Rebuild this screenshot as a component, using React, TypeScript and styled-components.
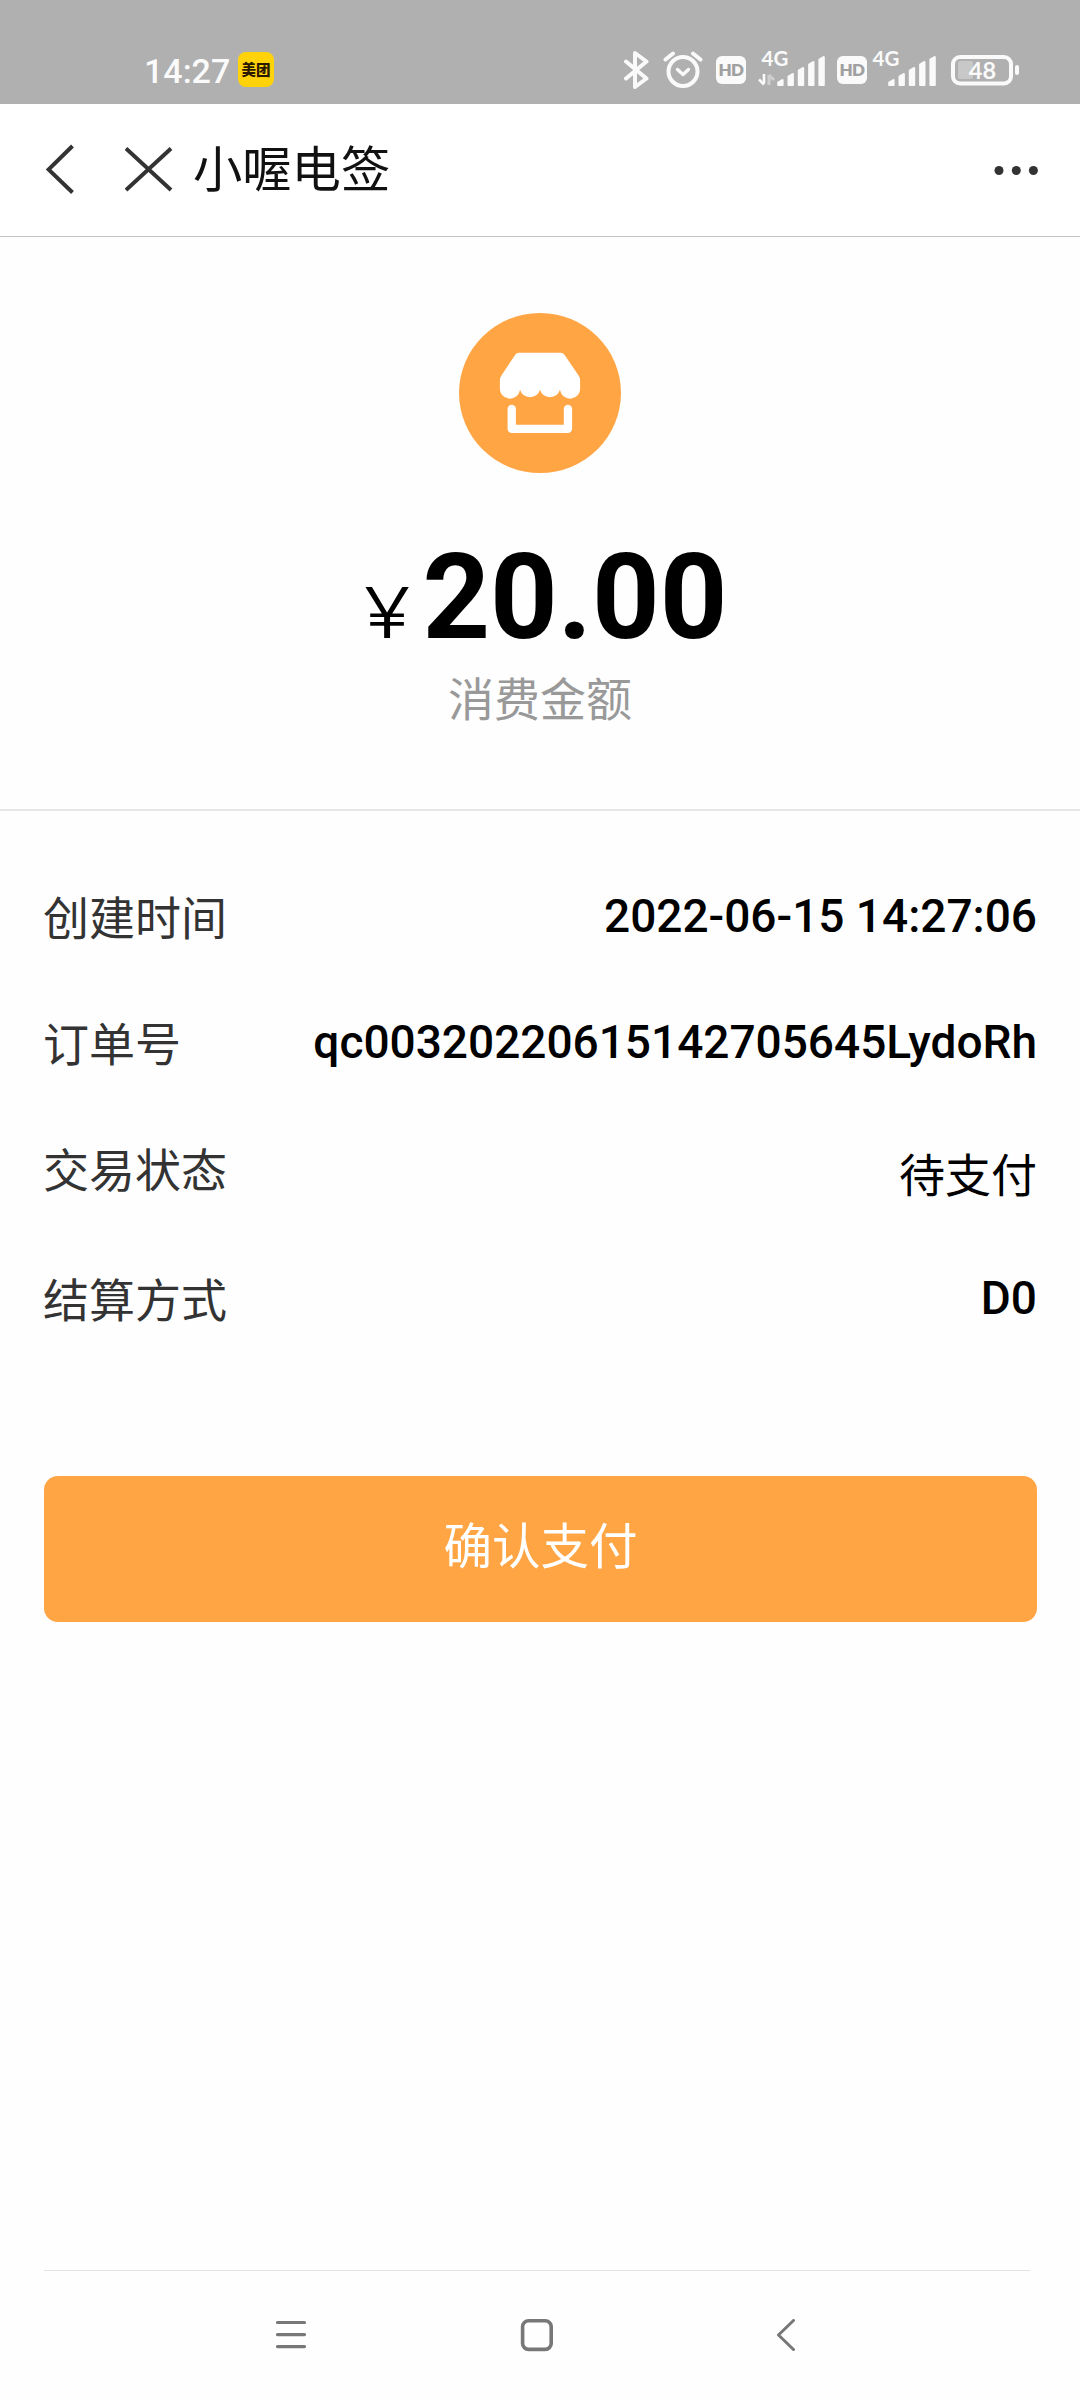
import React from "react";
import styled, { createGlobalStyle } from "styled-components";

const GlobalStyle = createGlobalStyle`
  * { box-sizing: border-box; }
  body { margin: 0; background: #fff; }
`;

const sans = `Roboto, "Noto Sans CJK SC", sans-serif`;

const Screen = styled.div`
  width: 1080px;
  height: 2400px;
  display: flex;
  flex-direction: column;
  background: #fefefe;
  font-family: ${sans};
  color: #000;
`;

const StatusBar = styled.div`
  height: 104px;
  display: flex;
  align-items: flex-start;
  background: #b0b0b0;
  color: #fafafa;
  padding: 50px 61px 0 144px;
`;

const Clock = styled.span`
  width: 94px;
  font-size: 34px;
  line-height: 42px;
  font-weight: 500;
  white-space: nowrap;
`;

const AppBadge = styled.span`
  width: 36px;
  height: 35px;
  margin-top: 2px;
  border-radius: 8px;
  background: #ffd20a;
  color: #2a1a00;
  font: 900 14.5px/34px "Noto Sans CJK SC", sans-serif;
  text-align: center;
  white-space: nowrap;
`;

const StatusIcons = styled.div`
  margin-left: auto;
  display: flex;
  align-items: flex-start;
  svg { display: block; }
`;

const HdBadge = styled.span<{ $left: number }>`
  width: 30px;
  height: 28px;
  margin: 6px 0 0 ${(p) => p.$left}px;
  border-radius: 6px;
  background: #fafafa;
  color: #a0a0a0;
  font: 800 17px/28px Lato, sans-serif;
  letter-spacing: -0.6px;
  text-align: center;
`;

const SignalSvg = styled.svg<{ $left: number }>`
  margin: -10px 0 0 ${(p) => p.$left}px;
`;

const BatterySvg = styled.svg`
  margin-left: 14px;
`;

const AlarmSvg = styled.svg`
  margin-left: 14px;
`;

const Header = styled.header`
  height: 133px;
  display: flex;
  align-items: flex-start;
  padding: 32px 42px 0 46px;
  border-bottom: 1px solid #c4c4c4;
  background: #fff;
`;

const HeaderIcon = styled.svg<{ $gap: number }>`
  display: block;
  flex: none;
  margin: 8px ${(p) => p.$gap}px 0 0;
`;

const Title = styled.h1`
  margin: 0;
  padding-top: 2px;
  font-size: 49.3px;
  line-height: 64px;
  font-weight: 400;
  color: #111;
  flex: 1;
`;

const Summary = styled.section`
  height: 574px;
  display: flex;
  flex-direction: column;
  align-items: center;
  padding-top: 76px;
  border-bottom: 2px solid #e7e7e7;
`;

const Amount = styled.div`
  display: flex;
  align-items: baseline;
  height: 140px;
  margin-top: 55px;
  line-height: 140px;
  padding-left: 11px;
`;

const Currency = styled.span`
  font-family: Inter, sans-serif;
  font-size: 70px;
  font-weight: 300;
  margin-right: 21px;
  transform: scaleX(1.22);
  transform-origin: left;
`;

const Figure = styled.span`
  font-size: 118px;
  font-weight: 700;
`;

const Caption = styled.div`
  margin-top: -2px;
  font-size: 46px;
  line-height: 68px;
  color: #999;
`;

const Details = styled.dl`
  margin: 0;
  padding: 44.5px 43px 0;
`;

const Row = styled.div<{ $cjk?: boolean }>`
  height: 126.4px;
  margin-bottom: ${(p) => (p.$cjk ? 3 : 0)}px;
  display: flex;
  justify-content: space-between;
  align-items: center;
`;

const Label = styled.dt`
  font-size: 46px;
  line-height: 60px;
  color: #333;
`;

const Value = styled.dd<{ $cjk?: boolean }>`
  margin: 0;
  padding: ${(p) => (p.$cjk ? "10px 0 0" : "0 0 6px")};
  font-size: 46px;
  line-height: 60px;
  font-weight: ${(p) => (p.$cjk ? 400 : 500)};
`;

const PayButton = styled.button`
  width: 993px;
  height: 146px;
  margin: 112px 0 0 44px;
  padding: 0 0 2px;
  border: 0;
  border-radius: 14px;
  background: #ffa544;
  color: #fff;
  font: 400 48.5px/60px ${sans};
`;

const BottomNav = styled.nav`
  margin: auto 50px 0 44px;
  height: 130px;
  display: flex;
  align-items: flex-start;
  border-top: 1px solid #e3e3e3;
  padding: 48px 0 0 231px;
`;

const NavIcon = styled.svg<{ $gap: number }>`
  display: block;
  margin-right: ${(p) => p.$gap}px;
`;

const rows = [
  { label: "创建时间", value: "2022-06-15 14:27:06" },
  { label: "订单号", value: "qc00320220615142705645LydoRh" },
  { label: "交易状态", value: "待支付", cjk: true },
  { label: "结算方式", value: "D0" },
];

function Signal({ left, arrows }: { left: number; arrows?: boolean }) {
  return (
    <SignalSvg $left={left} width="68" height="50" viewBox="0 -10 68 50" fill="#fafafa">
      <text x="3.5" y="16" fontFamily="Lato, sans-serif" fontWeight="700" fontSize="20.5">4G</text>
      {arrows && (
        <>
          <path d="M6 24v9.5M6 34.5L1 29.5" fill="none" stroke="#fafafa" strokeWidth="2.6" />
          <path d="M11 35V25M11 25l5 5" fill="none" stroke="#cfcfcf" strokeWidth="3" />
        </>
      )}
      {[7, 13, 19, 25, 30].map((h, i) => (
        <path key={h} d={`M${19.2 + i * 10.3} ${36 - h + 3}l5-3q1.4 0 1.400 1V35q0 1-1 1h-4.400q-1 0-1-1z`} />
      ))}
    </SignalSvg>
  );
}

export default function App() {
  return (
    <Screen>
      <GlobalStyle />
      <StatusBar>
        <Clock>14:27</Clock>
        <AppBadge>美团</AppBadge>
        <StatusIcons>
          <svg width="25" height="40" viewBox="0 0 25 40" fill="none" stroke="#fafafa" strokeWidth="4" strokeLinecap="round" strokeLinejoin="round">
            <path d="M2 11.5L22.5 28.5L11 37V3L22.5 11.5L2 28.5" />
          </svg>
          <AlarmSvg width="40" height="40" viewBox="0 0 40 40" fill="none" stroke="#fafafa" strokeLinecap="round" strokeLinejoin="round">
            <circle cx="20" cy="21.5" r="14.5" strokeWidth="4" />
            <path d="M14.5 19.5l5.5 5l5.5-5" strokeWidth="3.4" />
            <path d="M2.5 9.5L10 3.5M37.5 9.5L30 3.5" strokeWidth="4" />
          </AlarmSvg>
          <HdBadge $left={13}>HD</HdBadge>
          <Signal left={12} arrows />
          <HdBadge $left={11}>HD</HdBadge>
          <Signal left={2} />
          <BatterySvg width="68" height="40" viewBox="0 0 68 40">
            <rect x="7" y="11" width="15" height="18" rx="2" fill="#c8c8c8" />
            <rect x="2" y="7" width="58" height="26.5" rx="7" fill="none" stroke="#fafafa" strokeWidth="4" />
            <rect x="64" y="15" width="4" height="10" rx="2" fill="#fafafa" />
            <text x="31.5" y="28.5" textAnchor="middle" fontFamily="Lato, sans-serif" fontWeight="700" fontSize="23.5" fill="#fafafa">48</text>
          </BatterySvg>
        </StatusIcons>
      </StatusBar>

      <Header>
        <HeaderIcon $gap={50} width="29" height="52" viewBox="0 0 29 52" fill="none" stroke="#333" strokeWidth="4">
          <path d="M26.5 2L2.5 25.5L26.5 48.500" />
        </HeaderIcon>
        <HeaderIcon $gap={18} width="50" height="52" viewBox="0 0 50 52" fill="none" stroke="#333" strokeWidth="4">
          <path d="M1 4.500L46 46M46 4.500L1 46" />
        </HeaderIcon>
        <Title>小喔电签</Title>
        <HeaderIcon $gap={0} width="45" height="52" viewBox="0 0 45 52" fill="#333">
          <circle cx="6" cy="26.5" r="4.5" />
          <circle cx="23.3" cy="26.5" r="4.5" />
          <circle cx="40.4" cy="26.5" r="4.5" />
        </HeaderIcon>
      </Header>

      <Summary>
        <svg width="162" height="160" viewBox="88 68 487 479" preserveAspectRatio="none">
          <ellipse cx="331.5" cy="307.5" rx="243.5" ry="239.5" fill="#ffa544" />
          <path
            fill="#fff"
            d="M268 187H394Q401 187 405 193L447 254Q452 261 452 268V290A30.5 30.5 0 0 1 391.5 298A31.5 31.5 0 0 1 331.5 298A31.5 31.5 0 0 1 271.5 298A30.5 30.5 0 0 1 211 290V268Q211 261 216 254L257 193Q261 187 268 187Z"
          />
          <path d="M246.500 355V415H415.500V355" fill="none" stroke="#fff" strokeWidth="25" strokeLinecap="round" strokeLinejoin="round" />
        </svg>
        <Amount>
          <Currency>¥</Currency>
          <Figure>20.00</Figure>
        </Amount>
        <Caption>消费金额</Caption>
      </Summary>

      <Details>
        {rows.map((r) => (
          <Row key={r.label} $cjk={r.cjk}>
            <Label>{r.label}</Label>
            <Value $cjk={r.cjk}>{r.value}</Value>
          </Row>
        ))}
      </Details>

      <PayButton>确认支付</PayButton>

      <BottomNav>
        <NavIcon $gap={213} width="32" height="34" viewBox="0 0 32 34" fill="none" stroke="#777" strokeWidth="3.2" strokeLinecap="round">
          <path d="M2.500 3.500H29.500M2.500 15.600H29.500M2.500 27.600H29.500" />
        </NavIcon>
        <NavIcon $gap={221} width="34" height="34" viewBox="0 0 34 34" fill="none" stroke="#777" strokeWidth="3.6">
          <rect x="2.600" y="1.800" width="28.600" height="28.600" rx="6" />
        </NavIcon>
        <NavIcon $gap={0} width="22" height="34" viewBox="0 0 22 34" fill="none" stroke="#777" strokeWidth="3" strokeLinecap="round" strokeLinejoin="round">
          <path d="M18.500 1.500L3.500 16L18.500 30.500" />
        </NavIcon>
      </BottomNav>
    </Screen>
  );
}
